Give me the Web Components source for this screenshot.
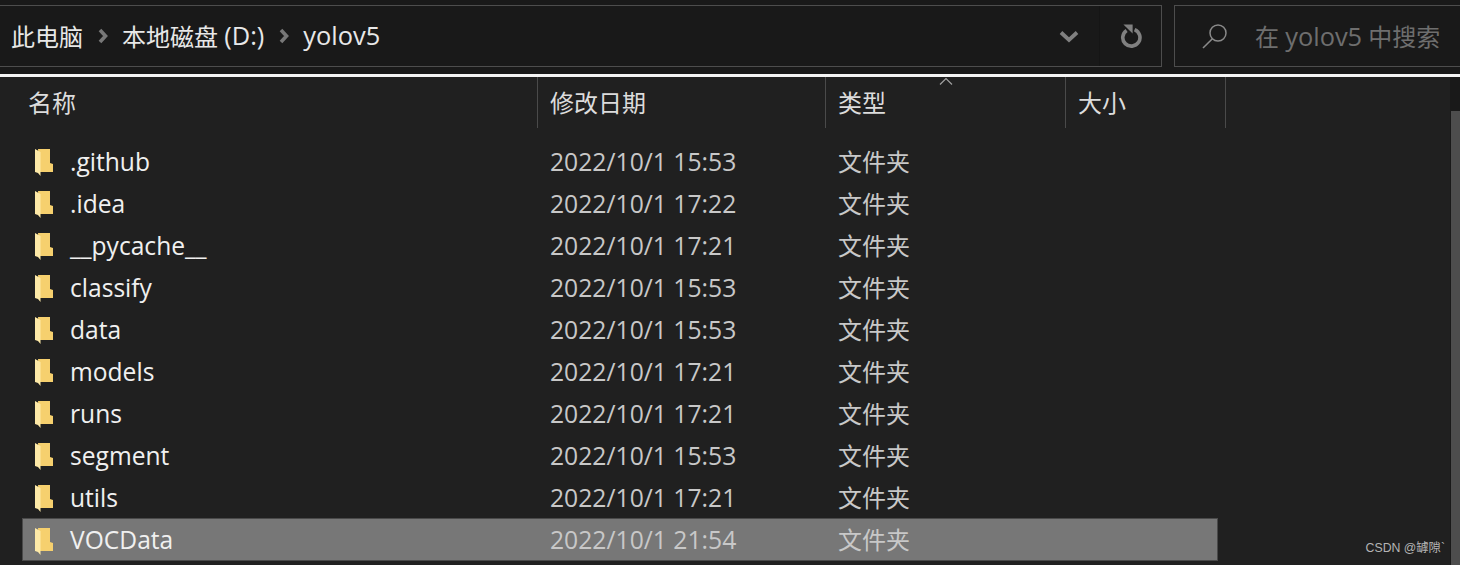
<!DOCTYPE html>
<html lang="zh">
<head>
<meta charset="utf-8">
<title>yolov5</title>
<style>
  html, body { margin: 0; height: 100%; background: #202020; overflow: hidden; }
  body { font-family: "Open Sans", "Noto Sans CJK SC", sans-serif; color: #e4e4e4; }
  .latin { font-size: 25.4px; }
</style>
</head>
<body>
<explorer-window>
  <explorer-toolbar slot="toolbar" location="yolov5">
    <explorer-crumb>此电脑</explorer-crumb>
    <explorer-crumb>本地磁盘 <span class="latin">(D:)</span></explorer-crumb>
    <explorer-crumb last><span class="latin">yolov5</span></explorer-crumb>
  </explorer-toolbar>
  <file-list>
    <file-row name=".github" date="2022/10/1 15:53"></file-row>
    <file-row name=".idea" date="2022/10/1 17:22"></file-row>
    <file-row name="__pycache__" date="2022/10/1 17:21"></file-row>
    <file-row name="classify" date="2022/10/1 15:53"></file-row>
    <file-row name="data" date="2022/10/1 15:53"></file-row>
    <file-row name="models" date="2022/10/1 17:21"></file-row>
    <file-row name="runs" date="2022/10/1 17:21"></file-row>
    <file-row name="segment" date="2022/10/1 15:53"></file-row>
    <file-row name="utils" date="2022/10/1 17:21"></file-row>
    <file-row name="VOCData" date="2022/10/1 21:54" selected></file-row>
  </file-list>
</explorer-window>
<script>
// ============================================================================
// Window shell
// ============================================================================
class ExplorerWindow extends HTMLElement {
  constructor() {
    super();
    this.attachShadow({ mode: 'open' });
    this.shadowRoot.innerHTML = `
      <style>
        :host { display: flex; flex-direction: column; height: 565px; position: relative; }
        .divider { height: 3px; background: #f4f4f4; flex: none; }
        .body { flex: 1; display: flex; min-height: 0; }
        .main { flex: 1; min-width: 0; }
        .scrollbar { width: 10px; flex: none; background: #191919; padding: 34px 0 0 1px; box-sizing: border-box; }
        .thumb { height: 100%; background: #4d4d4d; }
        .mark {
          position: absolute; right: 15px; bottom: 9px;
          font: 12.3px "Liberation Sans", "Noto Sans CJK SC", sans-serif; color: #b4b4b4;
        }
      </style>
      <slot name="toolbar"></slot>
      <div class="divider"></div>
      <div class="body">
        <div class="main"><slot></slot></div>
        <div class="scrollbar"><div class="thumb"></div></div>
      </div>
      <div class="mark">CSDN @罅隙\`</div>
    `;
  }
}
customElements.define('explorer-window', ExplorerWindow);

// ============================================================================
// Toolbar: address box and search box
// ============================================================================
class ExplorerToolbar extends HTMLElement {
  constructor() {
    super();
    this.attachShadow({ mode: 'open' });
    const location = this.getAttribute('location');
    this.shadowRoot.innerHTML = `
      <style>
        :host {
          display: flex; flex: none; height: 74px; box-sizing: border-box;
          padding: 5px 0 7px; background: #191919; gap: 12px;
        }
        .box { border: 1px solid #4d4d4d; box-sizing: border-box; display: flex; align-items: center; }
        .address { width: 1163px; margin-left: -1px; border-left: 0; }
        .path { flex: 1; display: flex; align-items: center; padding: 0 0 2px 12px; min-width: 0; }
        .btn { display: flex; align-items: center; justify-content: center; height: 100%; }
        .history { width: 57px; }
        .history svg { margin-right: 3px; }
        .refresh { width: 61px; border-left: 1px solid #151515; }
        .search { flex: 1; margin-right: -1px; border-right: 0; color: #6e6e6e; font-size: 24px; }
        .search svg { margin: 0 27px 0 27px; flex: none; }
        .search span { padding-bottom: 2px; }
        .search b { font-weight: 400; font-size: 25.4px; }
      </style>
      <div class="box address">
        <div class="path"><slot></slot></div>
        <div class="btn history">
          <svg width="20" height="13" viewBox="0 0 20 13"><path d="M2 2.5l8 7.5 8-7.5" fill="none" stroke="#808080" stroke-width="3.8"/></svg>
        </div>
        <div class="btn refresh">
          <svg width="22" height="24" viewBox="0 0 22 24"><path d="M6.6 6.4A8.6 8.6 0 1 0 14.6 5.6" fill="none" stroke="#808080" stroke-width="3.6"/><path d="M3.4 .4h9.2v9z" fill="#808080"/></svg>
        </div>
      </div>
      <div class="box search">
        <svg width="26" height="26" viewBox="0 0 26 26"><circle cx="16" cy="10" r="8" fill="none" stroke="#8a8a8a" stroke-width="1.5"/><path d="M10.4 15.8L1 25" stroke="#8a8a8a" stroke-width="1.6" fill="none"/></svg>
        <span>在 <b>${location}</b> 中搜索</span>
      </div>
    `;
  }
}
customElements.define('explorer-toolbar', ExplorerToolbar);

class ExplorerCrumb extends HTMLElement {
  constructor() {
    super();
    this.attachShadow({ mode: 'open' });
    const sep = this.hasAttribute('last') ? '' :
      `<svg width="10" height="16" viewBox="0 0 10 16"><path d="M2 2l5.5 6-5.5 6" fill="none" stroke="#787878" stroke-width="3.6"/></svg>`;
    this.shadowRoot.innerHTML = `
      <style>
        :host { display: flex; align-items: center; font-size: 24px; color: #e8e8e8; white-space: pre; }
        svg { margin: 2px 14px 0 15px; }
      </style>
      <slot></slot>${sep}
    `;
  }
}
customElements.define('explorer-crumb', ExplorerCrumb);

// ============================================================================
// File list
// ============================================================================
class FileList extends HTMLElement {
  constructor() {
    super();
    this.attachShadow({ mode: 'open' });
    this.shadowRoot.innerHTML = `
      <style>
        :host { display: block; }
        .head {
          display: grid; grid-template-columns: 516px 288px 240px 160px; margin-left: 22px; width: 1204px;
          height: 51px; position: relative; font-size: 24px; color: #dcdcdc;
        }
        .head div { border-right: 1px solid #4a4a4a; padding: 0 0 2px 12px; display: flex; align-items: center; box-sizing: border-box; }
        .head div:first-child { padding-left: 6px; }
        .caret { position: absolute; left: 917px; top: 0; }
        .rows { padding-top: 12px; display: flex; flex-direction: column; }
      </style>
      <div class="head">
        <div>名称</div><div>修改日期</div><div>类型</div><div>大小</div>
        <svg class="caret" width="14" height="9" viewBox="0 0 14 9"><path d="M1 7.5l6-6 6 6" fill="none" stroke="#a0a0a0" stroke-width="1.2"/></svg>
      </div>
      <div class="rows"><slot></slot></div>
    `;
  }
}
customElements.define('file-list', FileList);

class FileRow extends HTMLElement {
  constructor() {
    super();
    this.attachShadow({ mode: 'open' });
    const name = this.getAttribute('name');
    const date = this.getAttribute('date');
    this.shadowRoot.innerHTML = `
      <style>
        :host {
          display: grid; grid-template-columns: 516px 288px auto; align-items: center;
          height: 42px; margin-left: 22px; width: 1196px; box-sizing: border-box;
          font-size: 24px; color: #f0f0f0; white-space: nowrap;
        }
        :host([selected]) { background: #777; outline: 1px solid #4a4a4a; outline-offset: -1px; height: 43px; }
        .name { display: flex; align-items: center; font-size: 24.6px; }
        svg { margin: 3px 17px 0 13px; flex: none; }
        .date { padding-left: 12px; color: #c8c8c8; font-size: 24.7px; }
        .type { padding: 0 0 2px 12px; color: #c8c8c8; }
      </style>
      <div class="name">
        <svg width="18" height="27" viewBox="0 0 18 27">
          <path d="M3 0h12v14l3 1v8H5z" fill="#f6d06e"/>
          <path d="M0 0l5.5 3v24l-2.5-3-3-1z" fill="#fde9a7"/>
        </svg>
        <span>${name}</span>
      </div>
      <div class="date">${date}</div>
      <div class="type">文件夹</div>
    `;
  }
}
customElements.define('file-row', FileRow);
</script>
</body>
</html>
